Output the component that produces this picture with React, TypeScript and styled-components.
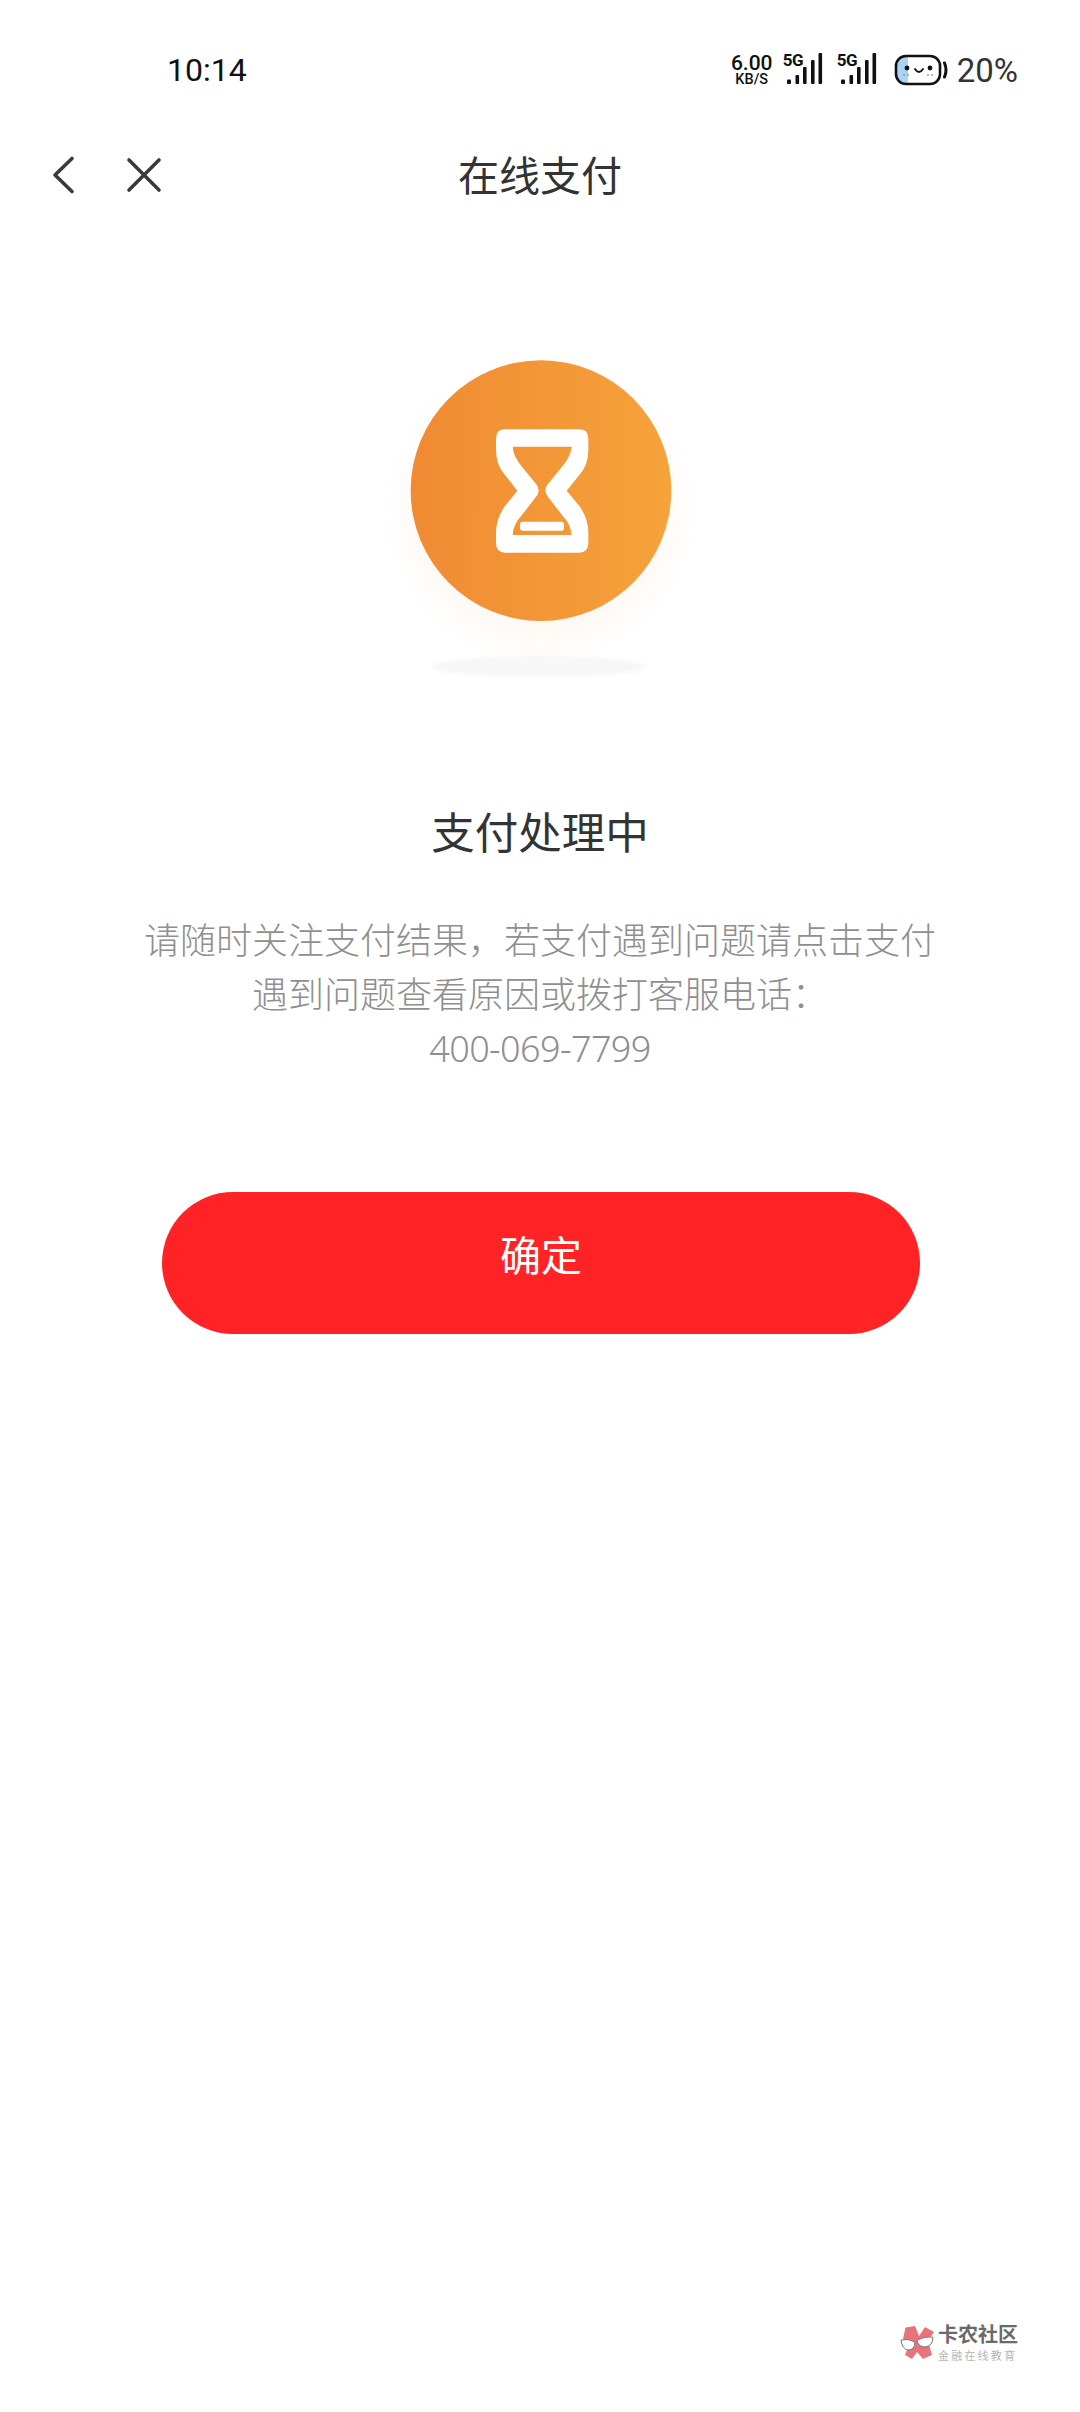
import React from "react";
import styled, { createGlobalStyle } from "styled-components";

const Global = createGlobalStyle`
  html, body { margin: 0; padding: 0; background: #fff; }
  * { box-sizing: border-box; }
`;

const FONT = `"Noto Sans", "Noto Sans CJK SC", sans-serif`;

const Page = styled.div`
  width: 1080px;
  height: 2412px;
  display: flex;
  flex-direction: column;
  align-items: center;
  background: #fff;
  overflow: hidden;
  font-family: ${FONT};
`;

const StatusBar = styled.div`
  width: 100%;
  height: 140px;
  padding: 0 62px 0 167px;
  display: flex;
  align-items: center;
  justify-content: space-between;
`;

const Time = styled.span`
  font-family: Roboto, sans-serif;
  font-size: 32px;
  color: #111;
`;

const StatusRight = styled.div`
  display: flex;
  align-items: center;
`;

const Speed = styled.div`
  width: 42px;
  display: flex;
  flex-direction: column;
  align-items: center;
  font-family: Roboto, sans-serif;
  color: #111;
  margin-right: 10px;
`;

const SpeedValue = styled.span`
  font-size: 21px;
  font-weight: 500;
  line-height: 18px;
`;

const SpeedUnit = styled.span`
  font-size: 14.5px;
  font-weight: 500;
  line-height: 15px;
`;

const Signal = styled.div<{ $gap: number }>`
  position: relative;
  width: 40px;
  height: 40px;
  margin-right: ${(p) => p.$gap}px;
`;

const SignalLabel = styled.span`
  position: absolute;
  left: 0;
  top: 2px;
  font-family: Roboto, sans-serif;
  font-size: 17px;
  font-weight: 700;
  line-height: 17px;
  letter-spacing: -0.5px;
  color: #111;
`;

const Percent = styled.span`
  font-family: Roboto, sans-serif;
  font-size: 33px;
  color: #333;
  margin-left: 8px;
`;

const NavBar = styled.div`
  width: 100%;
  height: 70px;
  padding: 0 50px;
  display: grid;
  grid-template-columns: 1fr auto 1fr;
  align-items: center;
`;

const NavIcons = styled.div`
  display: flex;
  align-items: center;
  gap: 50px;
`;

const NavTitle = styled.h1`
  margin: 0;
  font-size: 41px;
  font-weight: 400;
  color: #333;
  line-height: 70px;
`;

const Illustration = styled.svg`
  display: block;
  width: 320px;
  height: 360px;
  margin-top: 130px;
`;

const Heading = styled.h2`
  margin: 102px 0 0;
  font-size: 43.5px;
  font-weight: 400;
  line-height: 60px;
  color: #333;
`;

const Description = styled.p`
  width: 800px;
  margin: 52px 0 0;
  font-size: 36px;
  font-weight: 300;
  line-height: 54px;
  text-align: center;
  color: #8f8f8f;
`;

const Phone = styled.span`
  letter-spacing: -0.6px;
`;

const Confirm = styled.button`
  width: 758px;
  height: 142px;
  margin: 116px 0 0 2px;
  padding: 0 0 20px;
  border: none;
  border-radius: 71px;
  background: #ff2325;
  color: #fff;
  font-family: ${FONT};
  font-size: 41px;
  font-weight: 400;
`;

const Footer = styled.div`
  margin-top: auto;
  width: 100%;
  padding: 0 62px 50px 0;
  display: flex;
  justify-content: flex-end;
  align-items: center;
  gap: 3px;
`;

const Brand = styled.div`
  display: flex;
  flex-direction: column;
  gap: 4px;
`;

const BrandName = styled.span`
  font-size: 20px;
  font-weight: 700;
  line-height: 22px;
  color: #6a6a6a;
`;

const BrandSlogan = styled.span`
  font-size: 11px;
  line-height: 12px;
  letter-spacing: 2.2px;
  color: #b5b5b5;
`;

const SignalBars = () => (
  <svg width="40" height="40" viewBox="0 0 40 40">
    <g fill="#111">
      <rect x="4" y="29.5" width="4" height="4.5" rx="1" />
      <rect x="12.5" y="25" width="3.6" height="9" rx="1" />
      <rect x="20" y="17" width="3.6" height="17" rx="1" />
      <rect x="28" y="10" width="3.6" height="24" rx="1" />
      <rect x="35.5" y="3" width="3.6" height="31" rx="1" />
    </g>
  </svg>
);

const Battery = () => (
  <svg width="55" height="32" viewBox="0 0 55 32">
    <path d="M11 3H14V29H11Q3 29 3 21V11Q3 3 11 3Z" fill="#a9d4f5" />
    <rect x="2" y="2" width="44" height="28" rx="10" fill="none" stroke="#111" strokeWidth="2.6" />
    <path d="M50.5 9Q53.5 16 50.5 23" fill="none" stroke="#111" strokeWidth="3" strokeLinecap="round" />
    <circle cx="13" cy="14" r="2.4" fill="#111" />
    <circle cx="36" cy="14" r="2.4" fill="#111" />
    <path d="M21 15Q25 21 29 15" fill="none" stroke="#111" strokeWidth="2" strokeLinecap="round" />
    <path d="M10 20v2M14 20v2M34 20v2M38 20v2" stroke="#888" strokeWidth="1.2" />
  </svg>
);

const BackIcon = () => (
  <svg width="26" height="40" viewBox="0 0 26 40">
    <path d="M22 3.5L5 20L22 36.5" fill="none" stroke="#3a3a3a" strokeWidth="3.6" strokeLinecap="round" strokeLinejoin="round" />
  </svg>
);

const CloseIcon = () => (
  <svg width="36" height="36" viewBox="0 0 36 36">
    <path d="M3 3L33 33M33 3L3 33" fill="none" stroke="#3a3a3a" strokeWidth="3.6" strokeLinecap="round" />
  </svg>
);

const HourglassArt = () => (
  <Illustration viewBox="0 0 960 1080">
    <defs>
      <linearGradient id="disc" x1="0" y1="0" x2="1" y2="0">
        <stop offset="0" stopColor="#f08a33" />
        <stop offset="1" stopColor="#f5a33b" />
      </linearGradient>
      <filter id="glow" x="-30%" y="-30%" width="160%" height="160%">
        <feGaussianBlur stdDeviation="45" />
      </filter>
      <filter id="soft" x="-20%" y="-100%" width="140%" height="300%">
        <feGaussianBlur stdDeviation="6" />
      </filter>
    </defs>
    <circle cx="483" cy="510" r="400" fill="#fdf1e6" opacity="0.5" filter="url(#glow)" />
    <ellipse cx="477" cy="980" rx="320" ry="32" fill="#f7f7f8" filter="url(#soft)" />
    <circle cx="483" cy="452" r="391" fill="url(#disc)" />
    <path
      fillRule="evenodd"
      fill="#fff"
      d="M375 268H597Q625 268 625 296V330Q625 375 598 405L560 452L598 498Q625 535 625 580V610Q625 638 597 638H375Q348 638 348 610V580Q348 535 375 498L412 452L375 405Q348 375 348 330V296Q348 268 375 268Z
         M398 320H575Q572 350 546 380L502 434Q490 450 502 468L546 525Q572 552 575 585H398Q400 552 426 525L470 468Q482 450 470 434L426 380Q400 350 398 320Z"
    />
    <rect x="420" y="545" width="132" height="27" rx="8" fill="#fff" />
  </Illustration>
);

const LogoMark = () => (
  <svg width="35" height="36" viewBox="0 0 35 36">
    <path d="M5.5 2.5L15 1L19 11L25 2L34 7L28 16L32 30L23 34L17 27L12 34L5 30L9 20L3 14Z" fill="#e9737b" />
    <path d="M1 15Q8 13 15 17Q15 25 8 25Q2 24 1 15Z" fill="#fff" stroke="#777" strokeWidth="1" />
    <path d="M17 15Q25 11 33 12Q33 21 25 22Q18 22 17 15Z" fill="#fff" stroke="#777" strokeWidth="1" />
  </svg>
);

export default function App() {
  return (
    <Page>
      <Global />
      <StatusBar>
        <Time>10:14</Time>
        <StatusRight>
          <Speed>
            <SpeedValue>6.00</SpeedValue>
            <SpeedUnit>KB/S</SpeedUnit>
          </Speed>
          <Signal $gap={14}>
            <SignalBars />
            <SignalLabel>5G</SignalLabel>
          </Signal>
          <Signal $gap={17}>
            <SignalBars />
            <SignalLabel>5G</SignalLabel>
          </Signal>
          <Battery />
          <Percent>20%</Percent>
        </StatusRight>
      </StatusBar>
      <NavBar>
        <NavIcons>
          <BackIcon />
          <CloseIcon />
        </NavIcons>
        <NavTitle>在线支付</NavTitle>
      </NavBar>
      <HourglassArt />
      <Heading>支付处理中</Heading>
      <Description>
        请随时关注支付结果，若支付遇到问题请点击支付
        <br />
        遇到问题查看原因或拨打客服电话：
        <br />
        <Phone>400-069-7799</Phone>
      </Description>
      <Confirm>确定</Confirm>
      <Footer>
        <LogoMark />
        <Brand>
          <BrandName>卡农社区</BrandName>
          <BrandSlogan>金融在线教育</BrandSlogan>
        </Brand>
      </Footer>
    </Page>
  );
}
